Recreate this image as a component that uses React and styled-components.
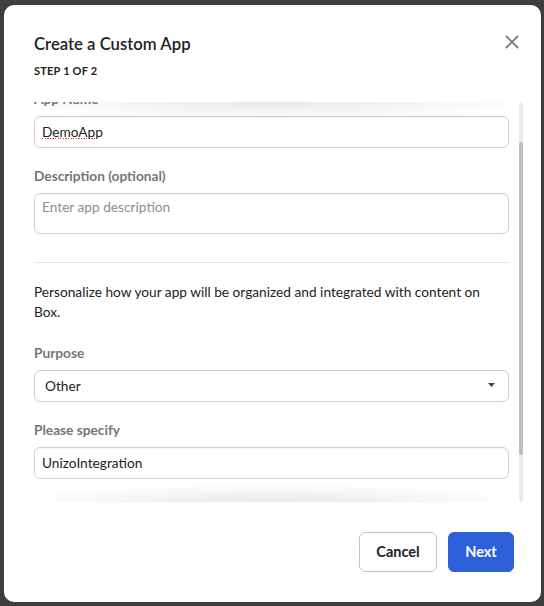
import React, { useLayoutEffect, useRef } from 'react';
import styled, { createGlobalStyle } from 'styled-components';

const GlobalStyle = createGlobalStyle`
    html, body {
        margin: 0;
        padding: 0;
        background: #3e3e3e;
    }
    * {
        box-sizing: border-box;
    }
`;

const Backdrop = styled.div`
    width: 544px;
    height: 606px;
    padding: 5px 0 0 4px;
    background: #3e3e3e;
    font-family: 'Lato', 'Liberation Sans', sans-serif;
    overflow: hidden;
`;

const Modal = styled.div`
    width: 537px;
    height: 597px;
    background: #fff;
    border-radius: 10px;
    display: flex;
    flex-direction: column;
`;

const Header = styled.div`
    display: flex;
    justify-content: space-between;
    align-items: flex-start;
    padding: 27px 21px 0 30px;
`;

const TitleBlock = styled.div`
    display: flex;
    flex-direction: column;
    gap: 8px;
`;

const Title = styled.div`
    font-size: 16.7px;
    line-height: 24px;
    font-weight: 600;
    color: #222;
`;

const Step = styled.div`
    font-size: 11px;
    line-height: 14px;
    font-weight: 700;
    color: #222;
    letter-spacing: 0.2px;
`;

const CloseButton = styled.button`
    border: none;
    background: none;
    padding: 0;
    margin-top: 2px;
    width: 16px;
    height: 16px;
    display: flex;
    align-items: center;
    justify-content: center;
    cursor: pointer;
`;

const ScrollWrap = styled.div`
    position: relative;
    display: flex;
    gap: 10px;
    margin: 24px 18px 0 30px;
    height: 400px;
`;

const Scroller = styled.div`
    width: 475px;
    height: 100%;
    overflow-y: auto;
    scrollbar-width: none;

    &::-webkit-scrollbar {
        display: none;
    }
`;

const Track = styled.div`
    width: 4px;
    height: 100%;
    background: #ebebeb;
    border-radius: 2px;
    display: flex;
    flex-direction: column;
`;

const Thumb = styled.div`
    background: #bcbcbc;
    border-radius: 2px;
`;

const Shade = styled.div`
    position: absolute;
    left: 0;
    width: 475px;
    height: 18px;
    pointer-events: none;
    ${(p) =>
        p.$bottom
            ? `bottom: 0; background: radial-gradient(ellipse 55% 100% at 50% 100%, rgba(0,0,0,0.09), rgba(0,0,0,0) 100%);`
            : `top: 0; background: radial-gradient(ellipse 55% 100% at 50% 0%, rgba(0,0,0,0.09), rgba(0,0,0,0) 100%);`}
`;

const Content = styled.div`
    padding: 40px 0 82px;
`;

const Field = styled.div`
    display: flex;
    flex-direction: column;
    gap: 9px;
    margin-bottom: ${(p) => p.$space || 0}px;
`;

const Label = styled.label`
    font-size: 13.7px;
    line-height: 16px;
    font-weight: 700;
    color: #767676;
`;

const TextInput = styled.input`
    width: 100%;
    height: 32px;
    border: 1px solid #d0d0d0;
    border-radius: 6px;
    padding: 0 7px 2px;
    font-family: 'Lato', 'Liberation Sans', sans-serif;
    font-size: 13.7px;
    color: #222;
    background-color: #fff;
    box-shadow: inset 0 1px 1px rgba(0, 0, 0, 0.04);
    outline: none;
    ${(p) =>
        p.$misspelled &&
        `background-image: repeating-linear-gradient(90deg, #e8392f 0 1.3px, transparent 1.3px 2.6px);
         background-size: 54px 1.4px;
         background-position: 7px 21px;
         background-repeat: no-repeat;`}
`;

const TextArea = styled.textarea`
    width: 100%;
    height: 41px;
    border: 1px solid #d0d0d0;
    border-radius: 6px;
    padding: 4px 7px;
    font-family: 'Lato', 'Liberation Sans', sans-serif;
    font-size: 13.7px;
    line-height: 17px;
    color: #222;
    resize: none;
    display: block;
    box-shadow: inset 0 1px 1px rgba(0, 0, 0, 0.04);
    outline: none;

    &::placeholder {
        color: #8e8e8e;
    }
`;

const Divider = styled.hr`
    border: none;
    border-top: 1px solid #e6e6e6;
    margin: 28px 0 19px;
`;

const Intro = styled.p`
    margin: 0 0 23px;
    font-size: 13.7px;
    line-height: 20px;
    color: #222;
`;

const Select = styled.div`
    height: 32px;
    border: 1px solid #d0d0d0;
    border-radius: 6px;
    padding: 0 13px 2px 10px;
    display: flex;
    align-items: center;
    justify-content: space-between;
    font-size: 13.7px;
    color: #222;
    box-shadow: inset 0 1px 1px rgba(0, 0, 0, 0.04);
`;

const Footer = styled.div`
    display: flex;
    justify-content: flex-end;
    gap: 11px;
    padding: 30px 27px 0 0;
`;

const Button = styled.button`
    height: 40px;
    min-width: ${(p) => (p.$primary ? 66 : 78)}px;
    padding: 0 15px 2px;
    border-radius: 6px;
    border: 1px solid ${(p) => (p.$primary ? '#2c5fd8' : '#c4c4c4')};
    background: ${(p) => (p.$primary ? '#2c5fd8' : '#fff')};
    color: ${(p) => (p.$primary ? '#fff' : '#222')};
    font-family: 'Lato', 'Liberation Sans', sans-serif;
    font-size: 14.5px;
    font-weight: 700;
    cursor: pointer;
`;

function CloseIcon() {
    return (
        <svg width="14" height="14" viewBox="0 0 14 14">
            <path d="M1.5 1.5 L12.5 12.5 M12.5 1.5 L1.5 12.5" stroke="#7d7d7d" strokeWidth="1.8" strokeLinecap="round" />
        </svg>
    );
}

function Caret() {
    return (
        <svg width="7" height="4" viewBox="0 0 7 4">
            <path d="M0 0 H7 L3.5 4 Z" fill="#444" />
        </svg>
    );
}

export default function App() {
    const scrollRef = useRef(null);

    // the reference is photographed part way down the form
    useLayoutEffect(() => {
        if (scrollRef.current) scrollRef.current.scrollTop = 51;
    }, []);

    return (
        <>
            <GlobalStyle />
            <Backdrop>
                <Modal>
                    <Header>
                        <TitleBlock>
                            <Title>Create a Custom App</Title>
                            <Step>STEP 1 OF 2</Step>
                        </TitleBlock>
                        <CloseButton aria-label="Close">
                            <CloseIcon />
                        </CloseButton>
                    </Header>
                    <ScrollWrap>
                        <Scroller ref={scrollRef}>
                            <Content>
                                <Field $space={20}>
                                    <Label>App Name</Label>
                                    <TextInput defaultValue="DemoApp" $misspelled spellCheck={false} />
                                </Field>
                                <Field>
                                    <Label>Description (optional)</Label>
                                    <TextArea placeholder="Enter app description" />
                                </Field>
                                <Divider />
                                <Intro>
                                    Personalize how your app will be organized and integrated with content on Box.
                                </Intro>
                                <Field $space={20}>
                                    <Label>Purpose</Label>
                                    <Select>
                                        <span>Other</span>
                                        <Caret />
                                    </Select>
                                </Field>
                                <Field>
                                    <Label>Please specify</Label>
                                    <TextInput defaultValue="UnizoIntegration" spellCheck={false} />
                                </Field>
                            </Content>
                        </Scroller>
                        <Track>
                            <Thumb style={{ marginTop: 40, height: 313 }} />
                        </Track>
                        <Shade />
                        <Shade $bottom />
                    </ScrollWrap>
                    <Footer>
                        <Button>Cancel</Button>
                        <Button $primary>Next</Button>
                    </Footer>
                </Modal>
            </Backdrop>
        </>
    );
}
